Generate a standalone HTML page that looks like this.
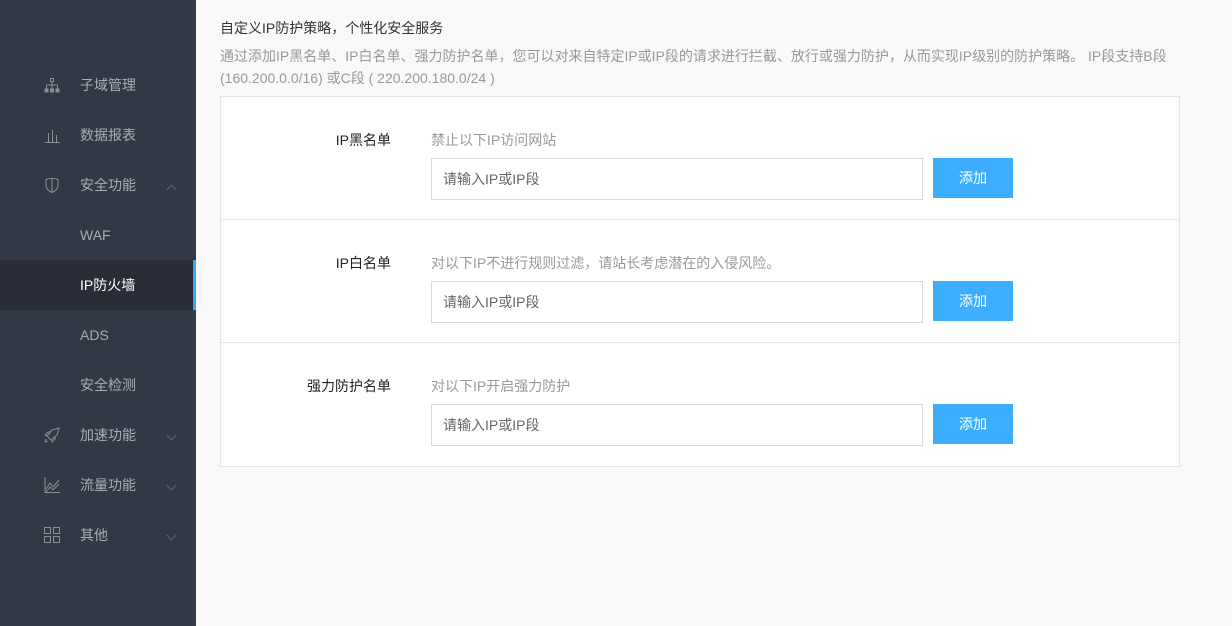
<!DOCTYPE html>
<html><head><meta charset="utf-8"><style>
*{margin:0;padding:0;box-sizing:border-box}
body{width:1232px;height:626px;overflow:hidden;background:#f9f9f9;font-family:"Liberation Sans","Noto Sans CJK SC",sans-serif;position:relative}
.side{position:absolute;left:0;top:0;width:196px;height:626px;background:#323846}
.item{position:absolute;left:0;width:196px;height:50px;color:#a9adb5;font-size:14px;line-height:50px;padding-left:80px}
.item svg{position:absolute;left:44px;top:17px}
.item.act{background:#282d37;color:#fff;border-right:3px solid #3aa8f4}
.chev{position:absolute;left:168px;top:22px;width:7px;height:7px;border-right:1px solid #5d6370;border-bottom:1px solid #5d6370;transform:rotate(45deg)}
.chev.up{transform:rotate(-135deg);top:26px}
.main{position:absolute;left:220px;top:0}
h1{position:absolute;left:220px;top:18px;font-size:14px;font-weight:normal;color:#333}
.desc{position:absolute;left:220px;top:45px;width:960px;font-size:14px;color:#999;line-height:22px}
.card{position:absolute;left:220px;top:96px;width:960px;height:371px;background:#fff;border:1px solid #e6e6e6}
.row{position:absolute;left:0;width:958px;height:123px;border-bottom:1px solid #e6e6e6}
.lab{position:absolute;right:788px;top:33px;font-size:14px;color:#222;white-space:nowrap}
.hint{position:absolute;left:210px;top:33px;font-size:14px;color:#999;white-space:nowrap}
.inp{position:absolute;left:210px;top:61px;width:492px;height:42px;border:1px solid #d9d9d9;font-size:14px;color:#666;line-height:40px;padding-left:11px}
.btn{position:absolute;left:712px;top:61px;width:80px;height:40px;background:#3caefd;color:#fff;font-size:14px;text-align:center;line-height:40px}
</style></head><body>
<div class="side">
<div class="item" style="top:60px"><svg width="16" height="16" viewBox="0 0 16 16" fill="none" stroke="#8a8f99"><rect x="6.5" y="1.5" width="3" height="3"/><path d="M8 4.5V8M2.5 8h11M2.5 8v4M8 8v4M13.5 8v4"/><rect x="1" y="12" width="3" height="3" fill="#8a8f99"/><rect x="6.5" y="12" width="3" height="3" fill="#8a8f99"/><rect x="12" y="12" width="3" height="3" fill="#8a8f99"/></svg>子域管理</div>
<div class="item" style="top:110px"><svg width="16" height="16" viewBox="0 0 16 16" fill="none" stroke="#8a8f99"><path d="M1 15.5h15M4.5 15V6M8.5 15V3M12.5 15V8"/></svg>数据报表</div>
<div class="item" style="top:160px"><svg width="16" height="16" viewBox="0 0 16 16" fill="none" stroke="#8a8f99"><path d="M2 2.5Q8 0 14 2.5V8Q14 13 8 15.5Q2 13 2 8Z"/><path d="M8 1.5V15"/></svg>安全功能<span class="chev up"></span></div>
<div class="item" style="top:210px">WAF</div>
<div class="item act" style="top:260px">IP防火墙</div>
<div class="item" style="top:310px">ADS</div>
<div class="item" style="top:360px">安全检测</div>
<div class="item" style="top:410px"><svg width="16" height="16" viewBox="0 0 16 16" fill="none" stroke="#8a8f99"><path d="M15 1L8 3 3 9l4 4 6-5zM3 9L1 8l3-3h3M7 13l1 2 3-3V9M2 12l-1 3 3-1"/></svg>加速功能<span class="chev"></span></div>
<div class="item" style="top:460px"><svg width="16" height="16" viewBox="0 0 16 16" fill="none" stroke="#8a8f99"><path d="M1 0v15.5h15M2 12l4-6 3 4 6-7M2 15l4-5 3 3 6-6"/></svg>流量功能<span class="chev"></span></div>
<div class="item" style="top:510px"><svg width="16" height="16" viewBox="0 0 16 16" fill="none" stroke="#8a8f99"><rect x="0.5" y="0.5" width="6" height="6"/><rect x="9.5" y="0.5" width="6" height="6"/><rect x="0.5" y="9.5" width="6" height="6"/><rect x="9.5" y="9.5" width="6" height="6"/></svg>其他<span class="chev"></span></div>
</div>
<h1>自定义IP防护策略，个性化安全服务</h1>
<div class="desc">通过添加IP黑名单、IP白名单、强力防护名单，您可以对来自特定IP或IP段的请求进行拦截、放行或强力防护，从而实现IP级别的防护策略。 IP段支持B段(160.200.0.0/16) 或C段 ( 220.200.180.0/24 )</div>
<div class="card">
<div class="row" style="top:0"><div class="lab">IP黑名单</div><div class="hint">禁止以下IP访问网站</div><div class="inp">请输入IP或IP段</div><div class="btn">添加</div></div>
<div class="row" style="top:123px"><div class="lab">IP白名单</div><div class="hint">对以下IP不进行规则过滤，请站长考虑潜在的入侵风险。</div><div class="inp">请输入IP或IP段</div><div class="btn">添加</div></div>
<div class="row" style="top:246px;border-bottom:none"><div class="lab">强力防护名单</div><div class="hint">对以下IP开启强力防护</div><div class="inp">请输入IP或IP段</div><div class="btn">添加</div></div>
</div>
</body></html>
